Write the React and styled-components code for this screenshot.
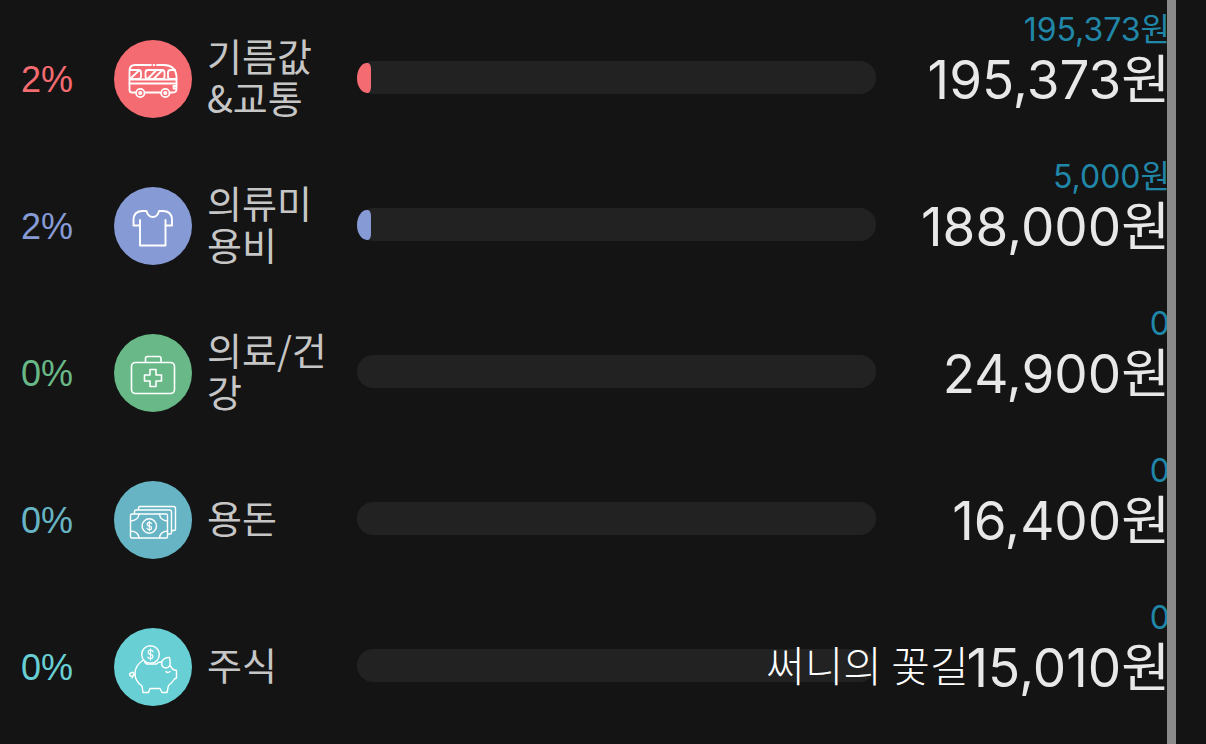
import React from 'react';
import styled, { createGlobalStyle } from 'styled-components';

const GlobalStyle = createGlobalStyle`
  * {
    box-sizing: border-box;
  }
  body {
    margin: 0;
    background: #141414;
    font-family: Inter, 'Noto Sans CJK KR', sans-serif;
  }
`;

const BusIcon = () => (
  <Icon viewBox="0 0 78 78" $line={1.8}>
    <path d="M37 25H21Q15.500 25 15.500 31V50Q15.500 52.500 18 52.500H21.500M31 52.500H46.500M56 52.500H59Q62.500 52.500 62.500 49V36Q61 25 50 25H43" />
    <path d="M39.500 25h1M15.500 39.500H62.500M15.500 43.500H62.500M62 46h-2.500v2.500H62" />
    <path d="M16 30H24.500Q27 30 27 32.500V36.500Q27 39 24.500 39H16M17 38L25 30.500" />
    <rect x="31.500" y="30" width="19" height="9" rx="2.500" />
    <path d="M34 38.500L42 30.500M40 38.500L48 30.500M61 30H56.500Q54 30 54 32.500V36.500Q54 39 56.500 39H62" />
    <circle cx="26.300" cy="53" r="4.200" />
    <circle cx="26.300" cy="53" r="1.200" />
    <circle cx="51.300" cy="53" r="4.200" />
    <circle cx="51.300" cy="53" r="1.200" />
  </Icon>
);

const ShirtIcon = () => (
  <Icon viewBox="0 0 78 78" $line={1.9}>
    <path d="M26 33V58.500H51.500V33" />
    <path d="M26 38.500H19.500V33Q19.500 24.500 28 24H32.500Q34 30 38.800 30T45 24H49.500Q58 24.500 58 33V38.500H51.500" />
  </Icon>
);

const MedicalIcon = () => (
  <Icon viewBox="0 0 78 78" $line={1.6}>
    <rect x="17.500" y="28.500" width="43" height="31" rx="4" />
    <path d="M31.500 28V24.500Q31.500 22.500 33.500 22.500H45Q47 22.500 47 24.500V28" />
    <path d="M36 35.500H42V41H47.500V47H42V52.500H36V47H30.500V41H36Z" />
  </Icon>
);

const CashIcon = () => (
  <Icon viewBox="0 0 78 78" $line={1.4}>
    <rect x="16.500" y="33" width="37" height="24" rx="1.500" />
    <path d="M20.500 32.500V30.500Q20.500 29 22 29H55.500Q57.500 29 57.500 31V51.500Q57.500 53 56 53H54" />
    <path d="M24.500 28.500V27Q24.500 25.500 26 25.500H59.500Q61.500 25.500 61.500 27.500V48Q61.500 49.500 60 49.500H58" />
    <circle cx="35.300" cy="45" r="7.200" />
    <path d="M37.500 42.700Q37 41.300 35.300 41.300Q33.200 41.300 33.200 43.200T35.300 45T37.500 46.900T35.300 48.700Q33.500 48.700 33 47.400M35.300 40.300V49.700" strokeWidth="1.200" />
    <path d="M16.500 40Q24.500 39.500 25 33M16.500 50Q24.500 50.500 25 57M53.500 40Q46 39.500 45.500 33M53.500 50Q46 50.500 45.500 57" />
  </Icon>
);

const PiggyIcon = () => (
  <Icon viewBox="0 0 78 78" $line={1.4}>
    <path d="M29.500 32Q21 37 21 46Q21 53 28 58L29 64.500H34.500L36 60.500H46L48 64.500H53L54.500 57.500Q58 55 60.500 51L62.500 50V42.500L59 41.500L56 37.500" />
    <path d="M30.500 34L32.500 36H42.500L44 34.500L48 34" />
    <circle cx="36.500" cy="26.500" r="8.800" />
    <path d="M39 23.700Q38.500 22.200 36.500 22.200Q34.200 22.200 34.200 24.200T36.500 26.300T38.900 28.500T36.500 30.600Q34.300 30.600 33.800 29M36.500 21V31.800" strokeWidth="1.200" />
    <path d="M48 33Q51 29 55.500 29.500Q56.500 33 56 37Q54 41 50 39.500Q46.500 38 48 33ZM52 43.500Q53.500 45.500 56 43.500" />
    <path d="M21 46.500Q17.500 49.500 16 47.500T18 44.500T18 50" />
  </Icon>
);

const categories = [
  { name: '기름값&교통', percent: 2, fill: 2.7, today: '195,373원', total: '195,373원', color: '#f56b72', icon: <BusIcon /> },
  { name: '의류미용비', percent: 2, fill: 2.7, today: '5,000원', total: '188,000원', color: '#869bd5', icon: <ShirtIcon /> },
  { name: '의료/건강', percent: 0, fill: 0, today: '0', total: '24,900원', color: '#68b987', icon: <MedicalIcon /> },
  { name: '용돈', percent: 0, fill: 0, today: '0', total: '16,400원', color: '#67b5c4', icon: <CashIcon /> },
  { name: '주식', percent: 0, fill: 0, today: '0', total: '15,010원', color: '#68cfd4', icon: <PiggyIcon />, caption: '써니의 꽃길' },
];

const CategoryRow = ({ item }) => {
  const { name, percent, fill, today, total, color, icon, caption } = item;
  return (
    <Row>
      <Percent $color={color}>{`${percent}%`}</Percent>
      <Badge $color={color}>{icon}</Badge>
      <Name>{name}</Name>
      <Track>{fill > 0 && <Fill $color={color} style={{ width: `${fill}%` }} />}</Track>
      <Amounts>
        <Today>{today}</Today>
        <Total>
          {caption && <Caption>{caption}</Caption>}
          {total}
        </Total>
      </Amounts>
    </Row>
  );
};

const App = () => (
  <>
    <GlobalStyle />
    <Page>
      <List>
        {categories.map((item) => (
          <CategoryRow key={item.name} item={item} />
        ))}
      </List>
      <Rail />
    </Page>
  </>
);

const Page = styled.main`
  display: flex;
  min-height: 100vh;
  padding-right: 30px;
`;

const List = styled.ul`
  flex: 1;
  min-width: 0;
  margin: 0;
  padding: 5px 0 0 21px;
  list-style: none;
`;

/* sits above the right edge of the amounts */
const Rail = styled.div`
  position: relative;
  z-index: 1;
  width: 9px;
  background: #8a8a8a;
`;

const Row = styled.li`
  display: flex;
  align-items: center;
  height: 147px;
`;

const Percent = styled.span`
  flex: none;
  width: 93px;
  padding-top: 2px;
  font-family: 'Liberation Sans', sans-serif;
  font-size: 36px;
  color: ${(props) => props.$color};
`;

const Badge = styled.span`
  flex: none;
  width: 78px;
  height: 78px;
  border-radius: 50%;
  background: ${(props) => props.$color};
`;

const Icon = styled.svg`
  display: block;
  width: 100%;
  height: 100%;
  fill: none;
  stroke: #fff;
  stroke-width: ${(props) => props.$line};
  stroke-linecap: round;
  stroke-linejoin: round;
`;

const Name = styled.span`
  flex: none;
  width: 126px;
  margin: 0 24px 0 15px;
  padding-bottom: 6px;
  font-family: 'Noto Sans CJK KR', sans-serif;
  font-size: 38px;
  font-weight: 400;
  line-height: 42px;
  word-break: break-all;
  color: #c6c6c6;
`;

const Track = styled.div`
  flex: 1;
  height: 33px;
  margin-bottom: 2px;
  padding: 2px 0;
  border-radius: 16px;
  background: #222;
`;

const Fill = styled.div`
  height: 30px;
  border-radius: 10px 3px 3px 10px / 15px 6px 6px 15px;
  background: ${(props) => props.$color};
`;

const Amounts = styled.div`
  display: flex;
  flex: none;
  flex-direction: column;
  align-items: flex-end;
  align-self: flex-start;
  width: 294px;
  margin-right: -3px;
  padding-top: 7px;
  white-space: nowrap;
`;

const Today = styled.span`
  font-size: 32px;
  font-weight: 400;
  line-height: 36px;
  color: #2187a9;
`;

const Total = styled.strong`
  position: relative;
  font-size: 53px;
  font-weight: 400;
  line-height: 64px;
  color: #e8e8e8;
`;

const Caption = styled.span`
  position: absolute;
  right: 100%;
  margin-right: -2px;
  font-family: 'Noto Sans CJK KR', sans-serif;
  font-size: 42px;
  font-weight: 300;
  line-height: 56px;
  color: #fff;
`;

export default App;
